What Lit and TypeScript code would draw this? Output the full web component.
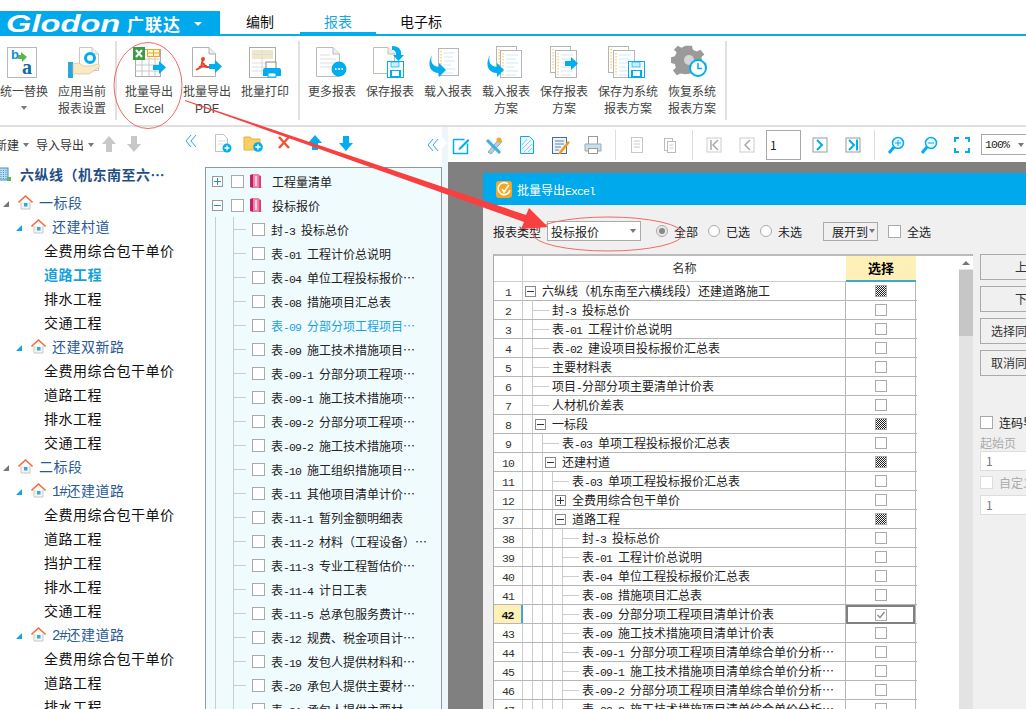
import { LitElement, html, css, svg } from "lit";
import { customElement } from "lit/decorators.js";

const t = (s: string) =>
  s.split(/([\x20-\x7e]+)/).map((p, i) => (i % 2 ? html`<span class="la">${p}</span>` : p));

const BLUE = "#00aeef";
const doc = (x: number, y: number, w: number, h: number, c = "#b9b4ac") => svg`
  <path d="M${x + .5} ${y + .5}H${x + w - 7}L${x + w - .5} ${y + 7}V${y + h - .5}H${x + .5}Z" fill="#fff" stroke=${c}/>
  <path d="M${x + w - 7} ${y + .5}V${y + 7}H${x + w - .5}" fill="#eee" stroke=${c}/>`;
const lined = (x: number, y: number, w: number, h: number) => svg`
  <rect x=${x + .5} y=${y + .5} width=${w} height=${h} fill="#fff" stroke="#b5b5b5"/>
  <path d="M${x + 3} ${y + 3}V${y + h - 2}" stroke="#f5b93c" stroke-dasharray="1.5 1.5"/>
  <path d="M${x + 6} ${y + 5}h${w - 9}M${x + 6} ${y + 9}h${w - 11}M${x + 6} ${y + 13}h${w - 9}M${x + 6} ${y + 17}h${w - 13}M${x + 6} ${y + 21}h${w - 9}M${x + 6} ${y + 25}h${w - 11}" stroke="#cfeaf7"/>`;
const floppy = (x: number, y: number) => svg`
  <rect x=${x + .5} y=${y + .5} width="16" height="16" fill="#fff" stroke=${BLUE}/>
  <rect x=${x + 4} y=${y + 1} width="8" height="5" fill="#c9eefc" stroke=${BLUE} stroke-width=".7"/>
  <rect x=${x + 3} y=${y + 9} width="11" height="7" fill=${BLUE}/>
  <rect x=${x + 5} y=${y + 10} width="7" height="5" fill="#fff"/>`;
const rarrow = (x: number, y: number) => svg`
  <path d="M${x} ${y + 3}h6v-4l7 6.5-7 6.5v-4h-6z" fill=${BLUE}/>`;
const curve = (x: number, y: number) => svg`
  <path d="M${x + 1} ${y}c-2 7 0 11 7 12v-4l7 7-7 7v-4c-8 0-12-7-8-16z" fill=${BLUE}/>`;

const ribbonIcons: Record<string, unknown> = {
  swap: svg`<rect x="1.5" y="3.5" width="29" height="30" fill="#fff" stroke="#b8b8b8"/>
    <text x="5" y="15" font-family="Liberation Sans" font-weight="700" font-size="13" fill="#0a8fd8">b</text>
    <text x="16" y="30" font-family="Liberation Serif" font-weight="700" font-size="20" fill="#106aa8">a</text>
    <path d="M12 11h3v-3l6 5-5 5v-3h-4z" fill="#57b947"/>`,
  apply: svg`${doc(15, 3, 20, 24, "#c9c9c9")}
    <circle cx="26" cy="14" r="4.5" fill="none" stroke=${BLUE} stroke-width="3"/>
    <rect x="4" y="18" width="5" height="16" fill="#2aa7de"/>
    <path d="M9 20c5-2 8 0 11 2h6l8-2c2 1 2 3 0 4l-9 6H9z" fill="#fbe9c4" stroke="#d6c293" stroke-width=".7"/>`,
  excel: svg`<rect x="4.5" y="5.5" width="25" height="27" fill="#fff" stroke="#aaa"/>
    <path d="M4.5 15h25M4.5 21h25M4.5 27h25M11 5v27M18 5v27M24 5v27" stroke="#c8c8c8"/>
    <rect x="2" y="3" width="12" height="13" fill="#3e9c43"/>
    <path d="M5 6l6 7M11 6l-6 7" stroke="#fff" stroke-width="2"/>
    <rect x="16.5" y="5.5" width="12" height="7" fill="#fff6d8" stroke="#efa81e"/><path d="M22.5 5.5v7M16.5 9h12" stroke="#efa81e"/>
    ${rarrow(22, 18)}`,
  pdf: svg`${doc(3, 3, 24, 30, "#b0b0b0")}
    <path d="M14 15l-2 8-5 3M14 19l3 4 5 0M10 23l8-1" fill="none" stroke="#e8412d" stroke-width="2"/><circle cx="14" cy="15" r="2" fill="#e8412d"/>
    ${rarrow(20, 17)}`,
  print: svg`<rect x="2.5" y="3.5" width="26" height="30" fill="#fff" stroke="#aaa"/>
    <rect x="5" y="6" width="21" height="9" fill="#efe7c8"/><path d="M5 10.500h21M5 19h21M5 23h14M5 27h14M15 6v25" stroke="#ddd"/>
    <rect x="19" y="18" width="10" height="9" fill="#fff" stroke="#888"/>
    <path d="M18 24h14a2 2 0 0 1 2 2v6h-5v-3h-8v3h-5v-6a2 2 0 0 1 2-2z" fill=${BLUE}/>
    <rect x="21" y="29" width="8" height="4" fill="#fff" stroke=${BLUE}/>`,
  more: svg`${doc(2, 3, 24, 30, "#bbb")}
    <path d="M6 11h10M6 15h16M6 19h16M6 23h12" stroke="#ddd"/>
    <circle cx="25" cy="25" r="7.500" fill=${BLUE}/><path d="M21 25h1.500M24.300 25h1.500M27.500 25h1.500" stroke="#fff" stroke-width="2"/>`,
  save: svg`${doc(1, 3, 22, 27, "#c5bdb3")}
    <path d="M20 2c6 0 10 3 9 9h3l-5.500 6-5.500-6h3c0-3-1-5-4-5z" fill=${BLUE}/>
    ${floppy(15, 17)}`,
  load: svg`${lined(8, 4, 20, 27)}${curve(1, 11)}`,
  loads: svg`${lined(8, 2, 20, 26)}${lined(12, 6, 21, 27)}${curve(1, 11)}`,
  saves: svg`${lined(4, 2, 20, 26)}${lined(9, 6, 21, 27)}${rarrow(19, 14)}`,
  savesys: svg`${lined(-2, 2, 20, 26)}${lined(3, 6, 21, 27)}${floppy(18, 17)}`,
  restore: svg`<path d="M15 3h6l1 4 4 2 4-2 4 5-3 3 1 5 4 1v5l-4 1-2 4-16 2-5-1-4 2-4-5 3-3-1-4-4-1v-6l4-1 2-4-3-3 4-4 4 2 4-2z" fill="#9a9a9a" transform="translate(-2 -1) scale(.95)"/>
    <circle cx="15" cy="16" r="5" fill="#d5d5d5"/>
    <circle cx="24" cy="24" r="8" fill="#fff" stroke=${BLUE} stroke-width="2"/><path d="M24 19v5.500h4" fill="none" stroke=${BLUE} stroke-width="1.500"/>`,
};

const tb: Record<string, unknown> = {
  edit: svg`<path d="M2.500 4.500h11M2.500 4.500v14h14v-10" fill="none" stroke=${BLUE} stroke-width="1.500"/><path d="M8 13l9-9 1.500 1.500-9 9-2 .5z" fill=${BLUE}/>`,
  wand: svg`<path d="M4 17L15 4l3 2.500L7 19z" fill="#bcd" stroke="#8ab"/><path d="M3 5l13 13" stroke="#39b0e5" stroke-width="3"/><circle cx="15" cy="5" r="2.500" fill="#f5a623"/>`,
  hatch: svg`<path d="M3.500 1.500h9l4 4v13h-13z" fill="#eaf8fe" stroke=${BLUE}/><path d="M5 10l5-6M5 14l9-9M7 17l8-8M11 17l4-4" stroke="#a8c8d8"/>`,
  list: svg`<rect x="2.500" y="2.500" width="14" height="16" fill="#eef3f9" stroke="#4a6d90"/><path d="M5 6h9M5 9h9M5 12h6M5 15h4" stroke="#5a86ae"/><path d="M9 17l9-11 2 1.500-9 11-3 1z" fill="#f39a1e"/>`,
  printer: svg`<rect x="5.500" y="1.500" width="9" height="8" fill="#fff" stroke="#9a9a9a"/><path d="M2 9h16v7H2z" fill="#c9dfe9" stroke="#9ab"/><rect x="5.500" y="13.500" width="9" height="5" fill="#fff" stroke="#9a9a9a"/>`,
  doc1: svg`<rect x="4.500" y="2.500" width="11" height="15" fill="#fff" stroke="#c8c8c8"/><path d="M7 6h6M7 9h6M7 12h6" stroke="#c8c8c8"/>`,
  doc2: svg`<rect x="4.500" y="3.500" width="8" height="12" fill="#fff" stroke="#bbb"/><rect x="7.500" y="6.500" width="8" height="11" fill="#fff" stroke="#bbb"/><path d="M9.500 10h4M9.500 13h4" stroke="#ccc"/>`,
  first: svg`<rect x="3" y="3" width="14" height="14" fill="#fff" stroke="#ccc"/><path d="M7 5v10M14 5l-5 5 5 5" fill="none" stroke="#aaa" stroke-width="1.500"/>`,
  prev: svg`<rect x="3" y="3" width="14" height="14" fill="#fff" stroke="#ccc"/><path d="M13 5l-5 5 5 5" fill="none" stroke="#aaa" stroke-width="1.500"/>`,
  next: svg`<rect x="3" y="3" width="14" height="14" fill="#fff" stroke="#9a9a9a"/><path d="M7 5l5 5-5 5" fill="none" stroke=${BLUE} stroke-width="2"/>`,
  last: svg`<rect x="3" y="3" width="14" height="14" fill="#fff" stroke="#9a9a9a"/><path d="M6 5l5 5-5 5M14 4.500v11" fill="none" stroke=${BLUE} stroke-width="2"/>`,
  zin: svg`<circle cx="12" cy="8" r="5.500" fill="#eaf8fe" stroke=${BLUE} stroke-width="1.500"/><path d="M9 8h6M12 5v6" stroke=${BLUE}/><path d="M8 12l-5 6" stroke=${BLUE} stroke-width="3"/>`,
  zout: svg`<circle cx="12" cy="8" r="5.500" fill="#eaf8fe" stroke=${BLUE} stroke-width="1.500"/><path d="M9 8h6" stroke=${BLUE}/><path d="M8 12l-5 6" stroke=${BLUE} stroke-width="3"/>`,
  full: svg`<path d="M3 7V3h4M13 3h4v4M17 13v4h-4M7 17H3v-4" fill="none" stroke=${BLUE} stroke-width="2"/>`,
  fileadd: svg`<path d="M3.500 1.500h8l4 4v13h-12z" fill="#fff" stroke="#c3c3c3"/><path d="M6 8h7M6 11h5" stroke="#ddd"/><circle cx="15" cy="15" r="4.500" fill=${BLUE}/><path d="M12.500 15h5M15 12.500v5" stroke="#fff" stroke-width="1.300"/>`,
  folderadd: svg`<path d="M1 4h6l2 2h8v11H1z" fill="#f9cf5f" stroke="#e6b13c"/><circle cx="15" cy="14" r="4.800" fill=${BLUE}/><path d="M12.300 14h5.400M15 11.300v5.400" stroke="#fff" stroke-width="1.300"/>`,
  del: svg`<path d="M5 4l10 11M15 4L5 15" stroke="#f0533c" stroke-width="2.400"/>`,
  up: svg`<path d="M10 2l7 8h-4v7H7v-7H3z" fill=${BLUE}/>`,
  down: svg`<path d="M10 18l7-8h-4V3H7v7H3z" fill=${BLUE}/>`,
  gup: svg`<path d="M10 2l7 8h-4v8H7v-8H3z" fill="#c8c8c8"/>`,
  gdown: svg`<path d="M10 18l7-8h-4V2H7v8H3z" fill="#c8c8c8"/>`,
};
const icon20 = (n: string) => html`<svg class="i20" viewBox="0 0 20 20">${tb[n]}</svg>`;
const chev = html`<svg class="chev" viewBox="0 0 12 14"><path d="M6 1L1 7l5 6M11 1L6 7l5 6" fill="none" stroke="#29a9dc"/></svg>`;
const house = html`<svg class="house" viewBox="0 0 15 15"><path d="M3 7v7h9V7" fill="#f4f4f4" stroke="#c8c8c8"/><path d="M.5 7.500l7-6.500 7 6.500" fill="none" stroke="#f2714a" stroke-width="1.600"/><rect x="6" y="8" width="3.500" height="3.500" fill="#35a7e0"/></svg>`;
const tri = (c: string) => html`<svg class="tri" viewBox="0 0 6 6"><path d="M6 0v6H0z" fill=${c}/></svg>`;
const book = html`<svg class="book" viewBox="0 0 14 15"><path d="M0 1l3-1v14l-3-1z" fill="#c4206a"/><path d="M3 0h6v14H3z" fill="#ef7fa8"/><path d="M5 2h2v10H5z" fill="#fbd3e2"/><path d="M9 1l2 1v12H9z" fill="#e0416f"/><path d="M11 12l3 1-3 1z" fill="#ddd"/></svg>`;

const ribbon1 = [
  { i: "swap", l: ["统一替换"], more: true },
  { i: "apply", l: ["应用当前", "报表设置"] },
];
const ribbon2 = [
  { i: "excel", l: ["批量导出", "Excel"] },
  { i: "pdf", l: ["批量导出", "PDF"] },
  { i: "print", l: ["批量打印"] },
];
const ribbon3 = [
  { i: "more", l: ["更多报表"] },
  { i: "save", l: ["保存报表"] },
  { i: "load", l: ["载入报表"] },
  { i: "loads", l: ["载入报表", "方案"] },
  { i: "saves", l: ["保存报表", "方案"] },
  { i: "savesys", l: ["保存为系统", "报表方案"], wide: true },
  { i: "restore", l: ["恢复系统", "报表方案"] },
];

const leftTree: [string, string][] = [
  ["root", "六纵线（机东南至六…"],
  ["l1", "一标段"], ["l2", "还建村道"],
  ["leaf", "全费用综合包干单价"], ["cur", "道路工程"], ["leaf", "排水工程"], ["leaf", "交通工程"],
  ["l2", "还建双新路"],
  ["leaf", "全费用综合包干单价"], ["leaf", "道路工程"], ["leaf", "排水工程"], ["leaf", "交通工程"],
  ["l1", "二标段"], ["l2", "1#还建道路"],
  ["leaf", "全费用综合包干单价"], ["leaf", "道路工程"], ["leaf", "挡护工程"], ["leaf", "排水工程"], ["leaf", "交通工程"],
  ["l2", "2#还建道路"],
  ["leaf", "全费用综合包干单价"], ["leaf", "道路工程"], ["leaf", "排水工程"],
];

const midRows = [
  "封-3 投标总价", "表-01 工程计价总说明", "表-04 单位工程投标报价…", "表-08 措施项目汇总表",
  "表-09 分部分项工程项目…", "表-09 施工技术措施项目…", "表-09-1 分部分项工程项…", "表-09-1 施工技术措施项…",
  "表-09-2 分部分项工程项…", "表-09-2 施工技术措施项…", "表-10 施工组织措施项目…", "表-11 其他项目清单计价…",
  "表-11-1 暂列金额明细表", "表-11-2 材料（工程设备）…", "表-11-3 专业工程暂估价…", "表-11-4 计日工表",
  "表-11-5 总承包服务费计…", "表-12 规费、税金项目计…", "表-19 发包人提供材料和…", "表-20 承包人提供主要材…",
  "表-21 承包人提供主要材…",
];

type R = [number, string, number, string, string];
const rows: R[] = [
  [1, "六纵线（机东南至六横线段）还建道路施工", 0, "m", "h"],
  [2, "封-3 投标总价", 1, "", ""],
  [3, "表-01 工程计价总说明", 1, "", ""],
  [4, "表-02 建设项目投标报价汇总表", 1, "", ""],
  [5, "主要材料表", 1, "", ""],
  [6, "项目-分部分项主要清单计价表", 1, "", ""],
  [7, "人材机价差表", 1, "", ""],
  [8, "一标段", 1, "m", "h"],
  [9, "表-03 单项工程投标报价汇总表", 2, "", ""],
  [10, "还建村道", 2, "m", "h"],
  [11, "表-03 单项工程投标报价汇总表", 3, "", ""],
  [12, "全费用综合包干单价", 3, "p", ""],
  [37, "道路工程", 3, "m", "h"],
  [38, "封-3 投标总价", 4, "", ""],
  [39, "表-01 工程计价总说明", 4, "", ""],
  [40, "表-04 单位工程投标报价汇总表", 4, "", ""],
  [41, "表-08 措施项目汇总表", 4, "", ""],
  [42, "表-09 分部分项工程项目清单计价表", 4, "", "c"],
  [43, "表-09 施工技术措施项目清单计价表", 4, "", ""],
  [44, "表-09-1 分部分项工程项目清单综合单价分析…", 4, "", ""],
  [45, "表-09-1 施工技术措施项目清单综合单价分析…", 4, "", ""],
  [46, "表-09-2 分部分项工程项目清单综合单价分析…", 4, "", ""],
  [47, "表-09-2 施工技术措施项目清单综合单价分析…", 4, "", ""],
];

@customElement("app-root")
export class AppRoot extends LitElement {
  static styles = css`
    :host {
      display: block; position: relative; width: 1026px; height: 709px; overflow: hidden; background: #fff;
      font-family: "Noto Sans CJK SC", "Liberation Sans", sans-serif; font-size: 12px; color: #222;
    }
    .la { font-family: "Liberation Mono", monospace; font-size: 11.500px; letter-spacing: -.9px; white-space: pre; }
    svg { display: block; flex: none; }
    .i20 { width: 20px; height: 20px; }
    .chev { width: 12px; height: 14px; }
    .top { height: 11px; }
    .head { display: flex; height: 25px; border-bottom: 2px solid #00aeef; box-sizing: border-box; }
    .logo {
      width: 220px; height: 25px; background: #00a8ec; color: #fff; display: flex; align-items: center; box-sizing: border-box; padding-left: 6px; flex: none;
    }
    .glodon { font: italic 700 23px/24px "Liberation Sans", sans-serif; width: 121px; white-space: nowrap; display: inline-block; transform: scaleX(1.420); transform-origin: 0 50%; }
    .brand { font-size: 17px; font-weight: 700; width: 60px; letter-spacing: 1px; white-space: nowrap; }
    .logo-caret { width: 0; height: 0; border: 4px solid transparent; border-top: 4px solid #fff; border-bottom: 0; margin-left: 7px; }
    .tab { width: 76px; text-align: center; font-size: 14px; line-height: 21px; color: #111; height: 23px; }
    .tab.first { width: 80px; }
    .tab.wide { width: 90px; }
    .tab.on { color: #1ba6e2; box-shadow: 0 -2px 0 #00aeef inset; }
    .ribbon { display: flex; height: 91px; padding-top: 8px; box-sizing: border-box; border-bottom: 2px solid #dfdfdf; margin-left: -5px; width: 1031px; }
    .rb { width: 58px; display: flex; flex-direction: column; align-items: center; color: #444; line-height: 17px; flex: none; white-space: nowrap; }
    .rb.wide { width: 70px; }
    .rb svg.ic { width: 36px; height: 36px; margin-bottom: 2px; overflow: visible; }
    .rb .la { font-family: "Liberation Sans", sans-serif; font-size: 12px; letter-spacing: 0; }
    .more-caret { width: 0; height: 0; border: 3px solid transparent; border-top: 4px solid #777; border-bottom: 0; margin-top: 7px; }
    .rdiv { width: 2px; height: 79px; background: #e0e0e0; margin: -3px 3px 0 4px; flex: none; }
    .main { display: flex; height: 582px; }
    .left { width: 205px; flex: none; overflow: hidden; }
    .ltool { display: flex; align-items: center; height: 35px; margin-left: -5px; color: #333; }
    .caret { width: 0; height: 0; border: 3px solid transparent; border-top: 4px solid #777; border-bottom: 0; margin: 1px 7px 0 4px; }
    .ltool .gu { margin-left: -2px; margin-top: -2px; }
    .ltool .gd { margin-left: 5px; margin-top: -2px; }
    .ltool .chev { margin-left: auto; margin-right: 8px; margin-top: -7px; }
    .ln { display: flex; align-items: center; height: 24px; font-size: 14px; letter-spacing: .5px; white-space: nowrap; color: #111; }
    .ln .la { font-size: 14px; letter-spacing: -1.200px; }
    .ln.root { font-weight: 700; color: #1f4e85; margin-bottom: 4px; padding-left: 20px; position: relative; }
    .bld { position: absolute; left: -2px; top: 5px; width: 13px; height: 14px; }
    .ln.l1, .ln.l2 { color: #2a5a94; }
    .ln.l1 { padding-left: 3px; }
    .ln.l2 { padding-left: 16px; }
    .ln.leaf, .ln.cur { padding-left: 44px; }
    .ln.cur { color: #13a3d8; font-weight: 700; }
    .tri { width: 6px; height: 6px; margin: 3px 9px 0 0; }
    .house { width: 15px; height: 15px; margin-right: 6px; }
    .mid { width: 237px; flex: none; display: flex; flex-direction: column; }
    .mtool { display: flex; align-items: center; height: 40px; padding: 0 0 8px 7px; box-sizing: border-box; gap: 11px; flex: none; }
    .mtool .chev { margin-left: auto; margin-right: 3px; margin-top: 4px; }
    .mbox { flex: 1; background: #f0fbfe; border: 1px solid #8f9a9e; border-bottom: 0; padding-top: 1px; overflow: hidden; }
    .mrow { display: flex; align-items: center; height: 24px; white-space: nowrap; color: #222; }
    .xp { width: 9px; height: 9px; border: 1px solid #999; position: relative; background: #fff; flex: none; box-sizing: content-box; }
    .xp::before { content: ""; position: absolute; left: 1px; right: 1px; top: 4px; height: 1px; background: #2a8fc6; }
    .xp.p::after { content: ""; position: absolute; top: 1px; bottom: 1px; left: 4px; width: 1px; background: #2a8fc6; }
    .mrow .xp { margin-left: 6px; margin-right: 8px; }
    .cb { width: 11px; height: 11px; border: 1px solid #aaa; background: #fff; flex: none; }
    .book { width: 14px; height: 15px; margin-right: 8px; }
    .mguide { width: 18px; margin-left: 9px; height: 24px; border-left: 1px solid #ccc; flex: none; box-sizing: border-box; }
    .mlead { width: 19px; height: 24px; border-left: 1px solid #ccc; box-sizing: border-box; flex: none; background: linear-gradient(#ccc, #ccc) no-repeat 0 50% / 12px 1px; }
    .mrow .cb { margin-right: 6px; }
    .mrow.blue { color: #19a3de; }
    .gap { width: 6px; flex: none; background: #edf6fa; position: relative; }
    .gap::after { content: ""; position: absolute; left: 0; top: 10px; border: 6px solid transparent; border-left: 5px solid #fff; }
    .pre { flex: 1; min-width: 0; display: flex; flex-direction: column; background: #808080; overflow: hidden; }
    .ptool { display: flex; align-items: center; height: 35px; background: #fff; flex: none; padding-left: 3px; }
    .ptool .i20 { margin-right: 13px; }
    .ptool .i20.e { margin-right: 0; }
    .pdiv { width: 1px; height: 30px; background: #ddd; flex: none; margin: 0 11px 0 12px; }
    .pdiv.s { margin-left: 11px; }
    .pinput { width: 30px; height: 28px; border: 1px solid #aaa; margin: 0 9px 0 9px; flex: none; padding-left: 3px; box-sizing: content-box; line-height: 28px; background: #fff; }
    .psel { width: 60px; height: 19px; border: 1px solid #aaa; margin-left: 9px; flex: none; display: flex; align-items: center; padding-left: 3px; background: #fff; }
    .psel .caret { margin: 0 0 0 9px; }
    .dlg { margin: 11px 0 0 35px; width: 640px; flex: none; background: #f0f0f0; }
    .dt { height: 32px; background: #00a8ec; color: #fff; display: flex; align-items: center; padding-left: 13px; gap: 5px; }
    .dt svg { width: 16px; height: 17px; }
    .db { padding: 16px 0 0 10px; }
    .opt { display: flex; align-items: center; height: 20px; margin-bottom: 14px; color: #222; white-space: nowrap; }
    .combo { width: 85px; height: 18px; border: 1px solid #aaa; background: #fff; margin-left: 6px; padding: 0 4px 0 3px; display: flex; align-items: center; justify-content: space-between; flex: none; box-sizing: content-box; }
    .combo .caret { margin: 0; }
    .rds { display: flex; gap: 10px; margin-left: 15px; }
    .rd { display: flex; align-items: center; gap: 6px; }
    .dot { width: 10px; height: 10px; border: 1px solid #aaa; border-radius: 50%; background: #fff; position: relative; flex: none; box-sizing: content-box; }
    .dot.on { background: #e8e8e8; }
    .dot.on::after { content: ""; position: absolute; inset: 2px; border-radius: 50%; background: #888; }
    .expand { width: 55px; height: 19px; border: 1px solid #aaa; margin-left: 21px; display: flex; align-items: center; padding-left: 8px; box-sizing: border-box; }
    .expand .caret { margin: 0 0 0 1px; }
    .all { display: flex; align-items: center; gap: 6px; margin-left: 10px; }
    .wrap { display: flex; gap: 7px; align-items: flex-start; }
    .tbl { display: flex; width: 480px; flex: none; background: #fff; border: 1px solid #aaa; border-top: 2px solid #bbb; height: 460px; box-sizing: border-box; margin-top: -1px; }
    .grid { width: 423px; flex: none; }
    .hrow, .row { display: flex; box-sizing: border-box; }
    .hrow { height: 26px; }
    .row { height: 19px; border-bottom: 1px solid #b6b6b6; }
    .no { width: 28px; border-right: 1px solid #ccc; flex: none; text-align: center; color: #333; line-height: 18px; }
    .no.cur { background: #fff0b8; font-weight: 700; color: #111; border-right: 2px solid #3aa8dc; width: 27px; }
    .name { width: 323px; flex: none; display: flex; align-items: stretch; line-height: 18px; padding-left: 9px; box-sizing: border-box; white-space: nowrap; color: #222; border-right: 1px solid #b6b6b6; }
    .name.r0 { padding-left: 2px; }
    .hname { width: 323px; flex: none; text-align: center; line-height: 24px; border-bottom: 1px solid #ccc; color: #333; }
    .hno { width: 28px; border-right: 1px solid #ccc; border-bottom: 1px solid #ccc; flex: none; }
    .hsel { width: 70px; flex: none; background: #fff0b8; border-bottom: 2px solid #3aa8dc; text-align: center; font-weight: 700; font-size: 13px; line-height: 24px; color: #000; box-sizing: border-box; }
    .sel { width: 70px; flex: none; display: flex; align-items: center; justify-content: center; border-right: 1px solid #b6b6b6; box-sizing: border-box; }
    .sel.act { box-shadow: inset 0 0 0 2px #808080; height: 19px; }
    .sel .cb { width: 10px; height: 10px; }
    .sel .cb.h { background: conic-gradient(#222 25%, #fff 0 50%, #222 0 75%, #fff 0) 0 0 / 2px 2px; }
    .sel .cb.c { display: flex; align-items: center; justify-content: center; }
    .sel .cb svg { width: 10px; height: 10px; }
    .guide { width: 10px; border-left: 1px solid #ccc; flex: none; box-sizing: border-box; }
    .lead { width: 20px; border-left: 1px solid #ccc; flex: none; box-sizing: border-box; display: flex; align-items: center; }
    .lead.line { background: linear-gradient(#ccc, #ccc) no-repeat 0 50% / 16px 1px; }
    .tx { width: 9px; height: 9px; border: 1px solid #888; background: #fff; position: relative; flex: none; margin-left: 2px; box-sizing: content-box; }
    .tx::before { content: ""; position: absolute; left: 1px; right: 1px; top: 4px; height: 1px; background: #333; }
    .tx.p::after { content: ""; position: absolute; top: 1px; bottom: 1px; left: 4px; width: 1px; background: #333; }
    .r0 .tx { margin: 4px 6px 0 0; }
    .blank { width: 42px; flex: none; }
    .sb { width: 14px; flex: none; background: #e3e3e3; display: flex; flex-direction: column; }
    .sbu { height: 13px; background: #fff; display: flex; justify-content: center; align-items: center; }
    .sbu i { width: 0; height: 0; border: 4px solid transparent; border-bottom: 4px solid #777; border-top: 0; }
    .thumb { height: 66px; margin-top: 1px; background: #c6c6c6; }
    .side { width: 96px; flex: none; display: flex; flex-direction: column; margin-top: -1px; }
    .btn { height: 26px; border: 1px solid #aaa; box-sizing: border-box; margin-bottom: 6px; line-height: 24px; padding-left: 10px; color: #333; white-space: nowrap; }
    .btn.pad { padding-left: 34px; }
    .ck { display: flex; align-items: center; gap: 6px; white-space: nowrap; color: #222; height: 14px; }
    .ck.first { margin-top: 33px; }
    .ck.off { color: #aaa; margin-top: 4px; }
    .ck.off .cb { border-color: #ddd; }
    .lab { color: #aaa; margin-top: 5px; line-height: 17px; }
    .inp { height: 18px; border: 1px solid #ddd; background: #fff; color: #777; padding-left: 5px; line-height: 18px; }
    .inp.two { margin-top: 6px; }
    .ann { position: absolute; left: 0; top: 0; width: 1026px; height: 709px; pointer-events: none; }
  `;

  rb(it: { i: string; l: string[]; more?: boolean; wide?: boolean }) {
    return html`<div class="rb ${it.wide ? "wide" : ""}">
      <svg class="ic" viewBox="0 0 36 36">${ribbonIcons[it.i]}</svg>
      ${it.l.map((s) => html`<div>${t(s)}</div>`)}
      ${it.more ? html`<div class="more-caret"></div>` : ""}
    </div>`;
  }

  row(r: R) {
    const [no, text, lvl, kind, sel] = r;
    const cur = no === 42;
    const g = Math.max(lvl - 1, 0);
    return html`<div class="row">
      <div class="no ${cur ? "cur" : ""}">${t(String(no))}</div>
      <div class="name ${lvl === 0 ? "r0" : ""}">
        ${Array.from({ length: g }, () => html`<span class="guide"></span>`)}
        ${lvl === 0
          ? html`<span class="tx"></span>`
          : html`<span class="lead ${kind ? "" : "line"}">${kind ? html`<span class="tx ${kind}"></span>` : ""}</span>`}
        <span>${t(text)}</span>
      </div>
      <div class="sel ${cur ? "act" : ""}">
        <span class="cb ${sel}">${sel === "c"
          ? html`<svg viewBox="0 0 10 10"><path d="M1.500 5l2.500 2.500L8.500 2" fill="none" stroke="#888" stroke-width="1.300"/></svg>`
          : ""}</span>
      </div>
    </div>`;
  }

  render() {
    return html`
      <div class="top"></div>
      <div class="head">
        <div class="logo">
          <span class="glodon">Glodon</span><span class="brand">广联达</span><span class="logo-caret"></span>
        </div>
        <div class="tab first">编制</div>
        <div class="tab on">报表</div>
        <div class="tab wide">电子标</div>
      </div>
      <div class="ribbon">
        ${ribbon1.map((i) => this.rb(i))}<div class="rdiv"></div>
        ${ribbon2.map((i) => this.rb(i))}<div class="rdiv"></div>
        ${ribbon3.map((i) => this.rb(i))}<div class="rdiv"></div>
      </div>
      <div class="main">
        <div class="left">
          <div class="ltool">
            <span>新建</span><span class="caret"></span><span>导入导出</span><span class="caret"></span>
            <span class="gu">${icon20("gup")}</span><span class="gd">${icon20("gdown")}</span>
            ${chev}
          </div>
          ${leftTree.map(([k, s]) => html`<div class="ln ${k}">
            ${k === "root"
              ? html`<svg class="bld" viewBox="0 0 13 14"><rect x="1" y="1" width="9" height="12" fill="#bcdcf0" stroke="#3d8fc8"/><path d="M3 3v9M5.500 3v9M8 3v9" stroke="#3d8fc8" stroke-dasharray="1 1"/><rect x="9" y="10" width="4" height="4" fill="#5cb85c"/></svg>`
              : ""}
            ${k === "l1" ? html`${tri("#777")}${house}` : ""}
            ${k === "l2" ? html`${tri("#10a5e8")}${house}` : ""}
            <span>${t(s)}</span>
          </div>`)}
        </div>
        <div class="mid">
          <div class="mtool">
            ${icon20("fileadd")}${icon20("folderadd")}${icon20("del")}${icon20("up")}${icon20("down")}${chev}
          </div>
          <div class="mbox">
            <div class="mrow"><span class="xp p"></span><span class="cb"></span>${book}<span>工程量清单</span></div>
            <div class="mrow"><span class="xp"></span><span class="cb"></span>${book}<span>投标报价</span></div>
            ${midRows.map((s, i) => html`<div class="mrow ${i === 4 ? "blue" : ""}">
              <span class="mguide"></span><span class="mlead"></span><span class="cb"></span><span>${t(s)}</span>
            </div>`)}
          </div>
        </div>
        <div class="gap"></div>
        <div class="pre">
          <div class="ptool">
            ${icon20("edit")}${icon20("wand")}${icon20("hatch")}${icon20("list")}<svg class="i20 e" viewBox="0 0 20 20">${tb.printer}</svg>
            <span class="pdiv"></span>
            ${icon20("doc1")}<svg class="i20 e" viewBox="0 0 20 20">${tb.doc2}</svg>
            <span class="pdiv"></span>
            ${icon20("first")}<svg class="i20 e" viewBox="0 0 20 20">${tb.prev}</svg>
            <span class="pinput">1</span>
            ${icon20("next")}<svg class="i20 e" viewBox="0 0 20 20">${tb.last}</svg>
            <span class="pdiv s"></span>
            ${icon20("zin")}${icon20("zout")}<svg class="i20 e" viewBox="0 0 20 20">${tb.full}</svg>
            <span class="psel">${t("100%")}<span class="caret"></span></span>
          </div>
          <div class="dlg">
            <div class="dt">
              <svg viewBox="0 0 16 17"><rect width="16" height="17" rx="3" fill="#f5a623"/><path d="M12 3a6 6 0 1 0 2 6M6 8l2 3 5-7" fill="none" stroke="#fff" stroke-width="1.600"/></svg>
              <span>${t("批量导出Excel")}</span>
            </div>
            <div class="db">
              <div class="opt">
                <span>报表类型</span>
                <span class="combo"><span>投标报价</span><span class="caret"></span></span>
                <span class="rds">
                  <span class="rd"><span class="dot on"></span>全部</span>
                  <span class="rd"><span class="dot"></span>已选</span>
                  <span class="rd"><span class="dot"></span>未选</span>
                </span>
                <span class="expand">展开到<span class="caret"></span></span>
                <span class="all"><span class="cb"></span>全选</span>
              </div>
              <div class="wrap">
                <div class="tbl">
                  <div class="grid">
                    <div class="hrow"><div class="hno"></div><div class="hname">名称</div><div class="hsel">选择</div></div>
                    ${rows.map((r) => this.row(r))}
                  </div>
                  <div class="blank"></div>
                  <div class="sb"><div class="sbu"><i></i></div><div class="thumb"></div></div>
                </div>
                <div class="side">
                  <div class="btn pad">上移</div>
                  <div class="btn pad">下移</div>
                  <div class="btn">选择同级</div>
                  <div class="btn">取消同级</div>
                  <div class="ck first"><span class="cb"></span>连码导出</div>
                  <div class="lab">起始页</div>
                  <div class="inp">1</div>
                  <div class="ck off"><span class="cb"></span>自定义</div>
                  <div class="inp two">1</div>
                </div>
              </div>
            </div>
          </div>
        </div>
      </div>
      <svg class="ann" viewBox="0 0 1026 709">
        <ellipse cx="148" cy="85.500" rx="34" ry="43" fill="none" stroke="#f06a6a"/>
        <ellipse cx="608" cy="234" rx="75" ry="17" fill="none" stroke="#f06a6a"/>
        <path d="M185 100L526 215L529 208L548 227L521 229L524 222L185 101Z" fill="#f84040"/>
      </svg>
    `;
  }
}
